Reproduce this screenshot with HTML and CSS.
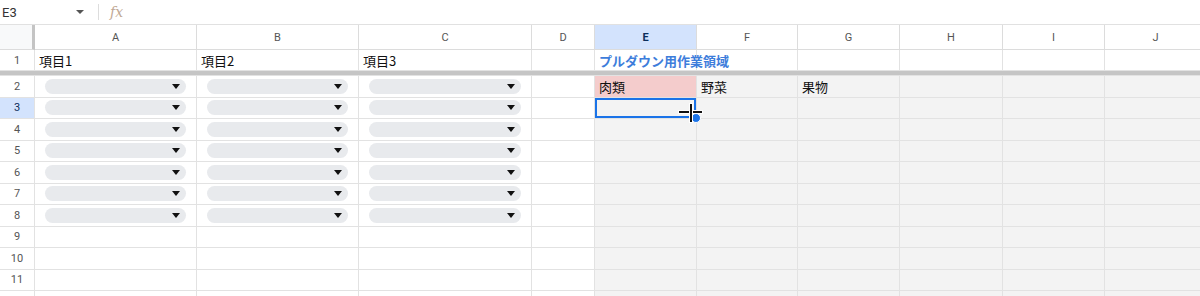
FILE: index.html
```html
<!DOCTYPE html>
<html lang="ja">
<head>
  <meta charset="UTF-8">
  <title>スプレッドシート</title>
  <link rel="stylesheet" href="styles.css">
</head>
<body>

<div class="formula-bar">
  <div class="name-box">
    <span>E3</span>
    <span class="caret"></span>
  </div>
  <div class="bar-sep"></div>
  <div class="fx">fx</div>
</div>

<div class="sheet">

  <div class="row head">
    <div class="cell rh corner"></div>
    <div class="cell">A</div>
    <div class="cell">B</div>
    <div class="cell">C</div>
    <div class="cell">D</div>
    <div class="cell sel">E</div>
    <div class="cell">F</div>
    <div class="cell">G</div>
    <div class="cell">H</div>
    <div class="cell">I</div>
    <div class="cell">J</div>
  </div>

  <div class="row r1">
    <div class="cell rh">1</div>
    <div class="cell">項目1</div>
    <div class="cell">項目2</div>
    <div class="cell">項目3</div>
    <div class="cell"></div>
    <div class="cell title">プルダウン用作業領域</div>
    <div class="cell"></div>
    <div class="cell"></div>
    <div class="cell"></div>
    <div class="cell"></div>
    <div class="cell"></div>
  </div>

  <div class="frozen"></div>

  <div class="row">
    <div class="cell rh">2</div>
    <div class="cell"><div class="chip"><span class="caret dark"></span></div></div>
    <div class="cell"><div class="chip"><span class="caret dark"></span></div></div>
    <div class="cell"><div class="chip"><span class="caret dark"></span></div></div>
    <div class="cell"></div>
    <div class="cell meat">肉類</div>
    <div class="cell work">野菜</div>
    <div class="cell work">果物</div>
    <div class="cell work"></div>
    <div class="cell work"></div>
    <div class="cell work"></div>
  </div>

  <div class="row">
    <div class="cell rh sel">3</div>
    <div class="cell"><div class="chip"><span class="caret dark"></span></div></div>
    <div class="cell"><div class="chip"><span class="caret dark"></span></div></div>
    <div class="cell"><div class="chip"><span class="caret dark"></span></div></div>
    <div class="cell"></div>
    <div class="cell work active">
      <span class="handle"></span>
      <span class="cursor"></span>
    </div>
    <div class="cell work"></div>
    <div class="cell work"></div>
    <div class="cell work"></div>
    <div class="cell work"></div>
    <div class="cell work"></div>
  </div>

  <div class="row">
    <div class="cell rh">4</div>
    <div class="cell"><div class="chip"><span class="caret dark"></span></div></div>
    <div class="cell"><div class="chip"><span class="caret dark"></span></div></div>
    <div class="cell"><div class="chip"><span class="caret dark"></span></div></div>
    <div class="cell"></div>
    <div class="cell work"></div>
    <div class="cell work"></div>
    <div class="cell work"></div>
    <div class="cell work"></div>
    <div class="cell work"></div>
    <div class="cell work"></div>
  </div>

  <div class="row">
    <div class="cell rh">5</div>
    <div class="cell"><div class="chip"><span class="caret dark"></span></div></div>
    <div class="cell"><div class="chip"><span class="caret dark"></span></div></div>
    <div class="cell"><div class="chip"><span class="caret dark"></span></div></div>
    <div class="cell"></div>
    <div class="cell work"></div>
    <div class="cell work"></div>
    <div class="cell work"></div>
    <div class="cell work"></div>
    <div class="cell work"></div>
    <div class="cell work"></div>
  </div>

  <div class="row">
    <div class="cell rh">6</div>
    <div class="cell"><div class="chip"><span class="caret dark"></span></div></div>
    <div class="cell"><div class="chip"><span class="caret dark"></span></div></div>
    <div class="cell"><div class="chip"><span class="caret dark"></span></div></div>
    <div class="cell"></div>
    <div class="cell work"></div>
    <div class="cell work"></div>
    <div class="cell work"></div>
    <div class="cell work"></div>
    <div class="cell work"></div>
    <div class="cell work"></div>
  </div>

  <div class="row">
    <div class="cell rh">7</div>
    <div class="cell"><div class="chip"><span class="caret dark"></span></div></div>
    <div class="cell"><div class="chip"><span class="caret dark"></span></div></div>
    <div class="cell"><div class="chip"><span class="caret dark"></span></div></div>
    <div class="cell"></div>
    <div class="cell work"></div>
    <div class="cell work"></div>
    <div class="cell work"></div>
    <div class="cell work"></div>
    <div class="cell work"></div>
    <div class="cell work"></div>
  </div>

  <div class="row">
    <div class="cell rh">8</div>
    <div class="cell"><div class="chip"><span class="caret dark"></span></div></div>
    <div class="cell"><div class="chip"><span class="caret dark"></span></div></div>
    <div class="cell"><div class="chip"><span class="caret dark"></span></div></div>
    <div class="cell"></div>
    <div class="cell work"></div>
    <div class="cell work"></div>
    <div class="cell work"></div>
    <div class="cell work"></div>
    <div class="cell work"></div>
    <div class="cell work"></div>
  </div>

  <div class="row">
    <div class="cell rh">9</div>
    <div class="cell"></div>
    <div class="cell"></div>
    <div class="cell"></div>
    <div class="cell"></div>
    <div class="cell work"></div>
    <div class="cell work"></div>
    <div class="cell work"></div>
    <div class="cell work"></div>
    <div class="cell work"></div>
    <div class="cell work"></div>
  </div>

  <div class="row">
    <div class="cell rh">10</div>
    <div class="cell"></div>
    <div class="cell"></div>
    <div class="cell"></div>
    <div class="cell"></div>
    <div class="cell work"></div>
    <div class="cell work"></div>
    <div class="cell work"></div>
    <div class="cell work"></div>
    <div class="cell work"></div>
    <div class="cell work"></div>
  </div>

  <div class="row">
    <div class="cell rh">11</div>
    <div class="cell"></div>
    <div class="cell"></div>
    <div class="cell"></div>
    <div class="cell"></div>
    <div class="cell work"></div>
    <div class="cell work"></div>
    <div class="cell work"></div>
    <div class="cell work"></div>
    <div class="cell work"></div>
    <div class="cell work"></div>
  </div>

  <!-- next row only peeks in at the bottom edge -->
  <div class="row">
    <div class="cell rh"></div>
    <div class="cell"></div>
    <div class="cell"></div>
    <div class="cell"></div>
    <div class="cell"></div>
    <div class="cell work"></div>
    <div class="cell work"></div>
    <div class="cell work"></div>
    <div class="cell work"></div>
    <div class="cell work"></div>
    <div class="cell work"></div>
  </div>

</div>

</body>
</html>
```

FILE: styles.css
```css
body {
  margin: 0;
  font-family: Roboto, "Noto Sans CJK JP", sans-serif;
  background: #fff;
  color: #222;
  overflow: hidden;
}

/* formula bar */
.formula-bar {
  height: 25px;
  box-sizing: border-box;
  display: flex;
  align-items: center;
  border-bottom: 1px solid #e1e1e1;
}
.name-box {
  width: 82px;
  display: flex;
  align-items: center;
  justify-content: space-between;
  padding: 0 0 0 2px;
  font-size: 13px;
  color: #333;
}
.caret {
  width: 0;
  height: 0;
  border-left: 4px solid transparent;
  border-right: 4px solid transparent;
  border-top: 4px solid #555;
}
.caret.dark {
  border-left-width: 4px;
  border-right-width: 4px;
  border-top: 5px solid #111;
}
.bar-sep {
  width: 1px;
  height: 16px;
  background: #ddd;
  margin-left: 14px;
}
.fx {
  margin-left: 11px;
  font-family: "DejaVu Serif", serif;
  font-style: italic;
  font-size: 14px;
  color: #bfa996;
}

/* grid */
.sheet {
  width: 1210px;
}
.row {
  display: grid;
  grid-template-columns: 35px 162px 162px 173px 63px 102px 101px 102px 103px 102px 102px;
  height: 21.5px;
}
.row.head {
  height: 25px;
}
.row.r1 {
  height: 21px;
}
.cell {
  box-sizing: border-box;
  border-right: 1px solid #e2e2e2;
  border-bottom: 1px solid #e2e2e2;
  display: flex;
  align-items: center;
  padding-left: 4px;
  font-size: 13px;
  font-family: "Noto Sans CJK JP", sans-serif;
  color: #111;
  position: relative;
  min-width: 0;
  white-space: nowrap;
}
.head .cell {
  justify-content: center;
  padding-left: 0;
  font-family: Roboto, sans-serif;
  font-size: 11px;
  color: #555;
  border-color: #dcdcdc;
}
.cell.rh {
  justify-content: center;
  padding-left: 0;
  font-family: Roboto, sans-serif;
  font-size: 11px;
  color: #555;
}
.head .cell.corner {
  background: #f8f9fa;
  border-right: 3px solid #c4c4c4;
}
.head .cell.sel {
  background: #d3e3fd;
  color: #0b2e5c;
  font-weight: bold;
}
.cell.rh.sel {
  background: #d3e3fd;
  color: #0b2e5c;
}
.cell.title {
  color: #3d7ddb;
  font-weight: bold;
}
.frozen {
  height: 5px;
  background: #c5c5c5;
  border-bottom: 1px solid #e2e2e2;
  box-sizing: border-box;
}
.cell.work {
  background: #f3f3f3;
}
.cell.meat {
  background: #f4cccc;
}
.cell.active {
  box-shadow: inset 0 0 0 2px #1a73e8;
  overflow: visible;
}

/* dropdown chip */
.chip {
  flex: 1;
  height: 15px;
  margin: 0 10px 0 6px;
  background: #e8eaed;
  border-radius: 8px;
  display: flex;
  align-items: center;
  justify-content: flex-end;
  padding-right: 6px;
}

/* overlays on the active cell */
.handle {
  position: absolute;
  right: -5px;
  bottom: -5px;
  width: 8px;
  height: 8px;
  border-radius: 50%;
  background: #1a73e8;
  border: 1px solid #fff;
  z-index: 2;
}
.cursor {
  position: absolute;
  left: 84px;
  top: 6px;
  width: 23px;
  height: 18px;
  z-index: 3;
}
.cursor::before,
.cursor::after {
  content: "";
  position: absolute;
  background: #111;
  box-shadow: 0 0 0 1px #fff;
}
.cursor::before {
  left: 0;
  top: 7px;
  width: 23px;
  height: 2px;
}
.cursor::after {
  left: 11px;
  top: 0;
  width: 2px;
  height: 18px;
}
```
